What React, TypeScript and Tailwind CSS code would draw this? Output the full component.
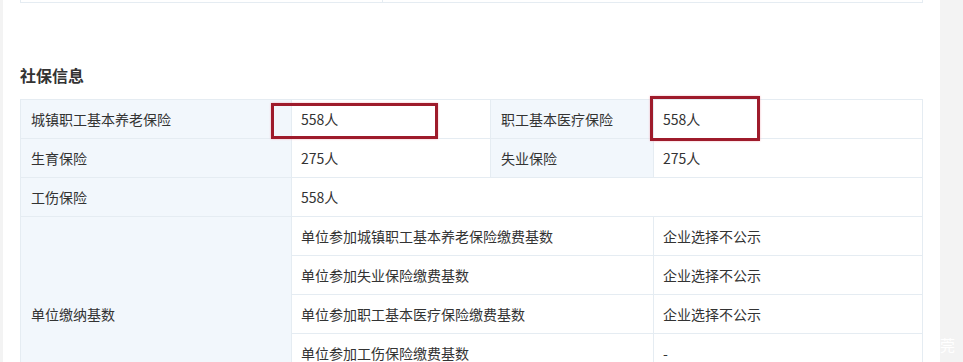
const font = '"Microsoft YaHei", "Noto Sans CJK SC", "Noto Sans", sans-serif';

const baseRows = [
  { label: '单位参加城镇职工基本养老保险缴费基数', value: '企业选择不公示' },
  { label: '单位参加失业保险缴费基数', value: '企业选择不公示' },
  { label: '单位参加职工基本医疗保险缴费基数', value: '企业选择不公示' },
  { label: '单位参加工伤保险缴费基数', value: '-' },
  { label: '单位参加生育保险缴费基数', value: '-' },
];

const th = 'bg-[#f2f7fc] border border-[#e5ecf2] px-[10px] text-left font-normal align-middle';
const td = 'border border-[#e5ecf2] px-[9px] align-middle';

export default function App() {
  return (
    <div className="flex min-h-[362px] bg-white text-[14px] text-[#333]" style={{ fontFamily: font }}>
      <div className="w-[3px] shrink-0 bg-[#f3f3f3]" />
      <div className="relative flex-1 px-[17px]">
        {/* end of the previous section's table */}
        <div className="flex h-[3px] border-x border-b border-[#e5ecf2]">
          <div className="w-[362px] border-r border-[#e5ecf2]" />
          <div className="flex-1" />
        </div>

        <h3 className="mt-[60px] text-[16px] font-bold leading-6 text-[#333]">社保信息</h3>

        <div className="relative mt-[12px]">
          <table className="w-full table-fixed border-collapse">
            <colgroup>
              <col className="w-[271px]" />
              <col className="w-[199px]" />
              <col className="w-[163px]" />
              <col />
            </colgroup>
            <tbody>
              <tr className="h-[39px]">
                <th className={th}>城镇职工基本养老保险</th>
                <td className={td}>558人</td>
                <th className={th}>职工基本医疗保险</th>
                <td className={td}>558人</td>
              </tr>
              <tr className="h-[39px]">
                <th className={th}>生育保险</th>
                <td className={td}>275人</td>
                <th className={th}>失业保险</th>
                <td className={td}>275人</td>
              </tr>
              <tr className="h-[39px]">
                <th className={th}>工伤保险</th>
                <td className={td} colSpan={3}>558人</td>
              </tr>
              {baseRows.map((r, i) => (
                <tr key={r.label} className="h-[39px]">
                  {i === 0 && (
                    <th className={th} rowSpan={baseRows.length}>单位缴纳基数</th>
                  )}
                  <td className={td} colSpan={2}>{r.label}</td>
                  <td className={td}>{r.value}</td>
                </tr>
              ))}
            </tbody>
          </table>

          {/* highlight marks */}
          <div className="pointer-events-none absolute left-[251px] top-[4px] h-[36px] w-[167px] border-[3px] border-[#9e1b2b] shadow-[0_0_2px_#f3b5bf]" />
          <div className="pointer-events-none absolute left-[630px] top-[-3px] h-[45px] w-[110px] border-[3px] border-[#9e1b2b] shadow-[0_0_2px_#f3b5bf]" />
        </div>
      </div>
      <div className="relative w-[23px] shrink-0 bg-[#f3f3f3]">
        <span className="absolute left-[0px] top-[334px] text-[15px] text-white">莞</span>
      </div>
    </div>
  );
}
